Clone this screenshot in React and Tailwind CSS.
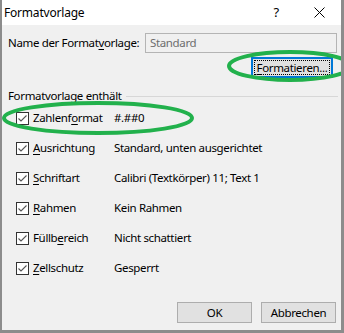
import React from 'react';

function Check() {
  return (
    <span className="w-[13px] h-[13px] border border-[#333333] bg-white flex items-center justify-center shrink-0">
      <svg width="11" height="11" viewBox="0 0 11 11">
        <path d="M1.5 5.5 L4 8 L9.5 2.5" fill="none" stroke="#555555" strokeWidth="1.1" />
      </svg>
    </span>
  );
}

function Acc({ pre, key_, post }) {
  return (
    <span className="whitespace-nowrap">
      {pre}
      <span className="underline underline-offset-[2px] decoration-[1px]">{key_}</span>
      {post}
    </span>
  );
}

export default function App() {
  const rows = [
    { label: <Acc pre="Zahlenf" key_="o" post="rmat" />, value: '#.##0' },
    { label: <Acc pre="" key_="A" post="usrichtung" />, value: 'Standard, unten ausgerichtet' },
    { label: <Acc pre="" key_="S" post="chriftart" />, value: 'Calibri (Textkörper) 11; Text 1' },
    { label: <Acc pre="" key_="R" post="ahmen" />, value: 'Kein Rahmen' },
    { label: <Acc pre="Füllb" key_="e" post="reich" />, value: 'Nicht schattiert' },
    { label: <Acc pre="" key_="Z" post="ellschutz" />, value: 'Gesperrt' },
  ];

  return (
    <div className="relative w-[344px] h-[333px] overflow-hidden bg-[#f0f0f0] border-l-2 border-r-[3px] border-b-[3px] border-[#8c8c8c] flex flex-col text-[11.5px] tracking-[-0.35px] text-black font-['Noto_Sans',sans-serif]">
      {/* title bar */}
      <div className="h-[25px] bg-white flex items-center pl-[2px] shrink-0 text-[12px] tracking-[-0.2px]">
        <span className="leading-none">Formatvorlage</span>
        <span className="ml-auto text-[13px] leading-none mr-[35px]">?</span>
        <svg width="11" height="11" viewBox="0 0 11 11" className="mr-[16px]">
          <path d="M0.5 0.5 L10.5 10.5 M10.5 0.5 L0.5 10.5" stroke="#000" strokeWidth="1" />
        </svg>
      </div>

      {/* name */}
      <div className="flex items-center mt-[8px] pl-[6px] pr-[4px] h-[20px]">
        <span className="w-[137px]">
          <Acc pre="Name der Format" key_="v" post="orlage:" />
        </span>
        <div className="flex-1 h-[20px] border border-[#b4b4b4] bg-[#f0f0f0] flex items-center pl-[4px] text-[#6d6d6d]">
          Standard
        </div>
      </div>

      <div className="flex justify-end mt-[4px] pr-[8px]">
        <button className="w-[82px] h-[21px] border-2 border-[#0078d7] bg-[#e1e1e1] p-[1px]">
          <span className="w-full h-full border border-dotted border-black flex items-center justify-center leading-none">
            <Acc pre="" key_="F" post="ormatieren..." />
          </span>
        </button>
      </div>

      {/* group */}
      <div className="flex items-center mt-[11px] h-[14px] pl-[6px] pr-[3px] gap-[4px]">
        <span className="leading-none">Formatvorlage enthält</span>
        <div className="flex-1 h-px bg-[#d7d7d7]" />
      </div>

      <div className="flex flex-col pl-[14px]">
        {rows.map((r, i) => (
          <div key={i} className="h-[30px] flex items-center">
            <Check />
            <span className="w-[85px] pl-[4px] leading-none">{r.label}</span>
            <span className="leading-none">{r.value}</span>
          </div>
        ))}
      </div>

      <div className="flex justify-end gap-[9px] mt-[19px] pr-[5px]">
        <button className="w-[75px] h-[21px] border border-[#adadad] bg-[#e1e1e1] leading-none">OK</button>
        <button className="w-[75px] h-[21px] border border-[#adadad] bg-[#e1e1e1] leading-none">Abbrechen</button>
      </div>

      {/* annotations */}
      <svg className="absolute left-[-2px] top-0 pointer-events-none" width="344" height="333" viewBox="0 0 344 333">
        <ellipse cx="290" cy="66" rx="61" ry="14" fill="none" stroke="#22b14c" strokeWidth="4" />
        <ellipse cx="98" cy="118" rx="94" ry="15" fill="none" stroke="#22b14c" strokeWidth="4" />
      </svg>
    </div>
  );
}
